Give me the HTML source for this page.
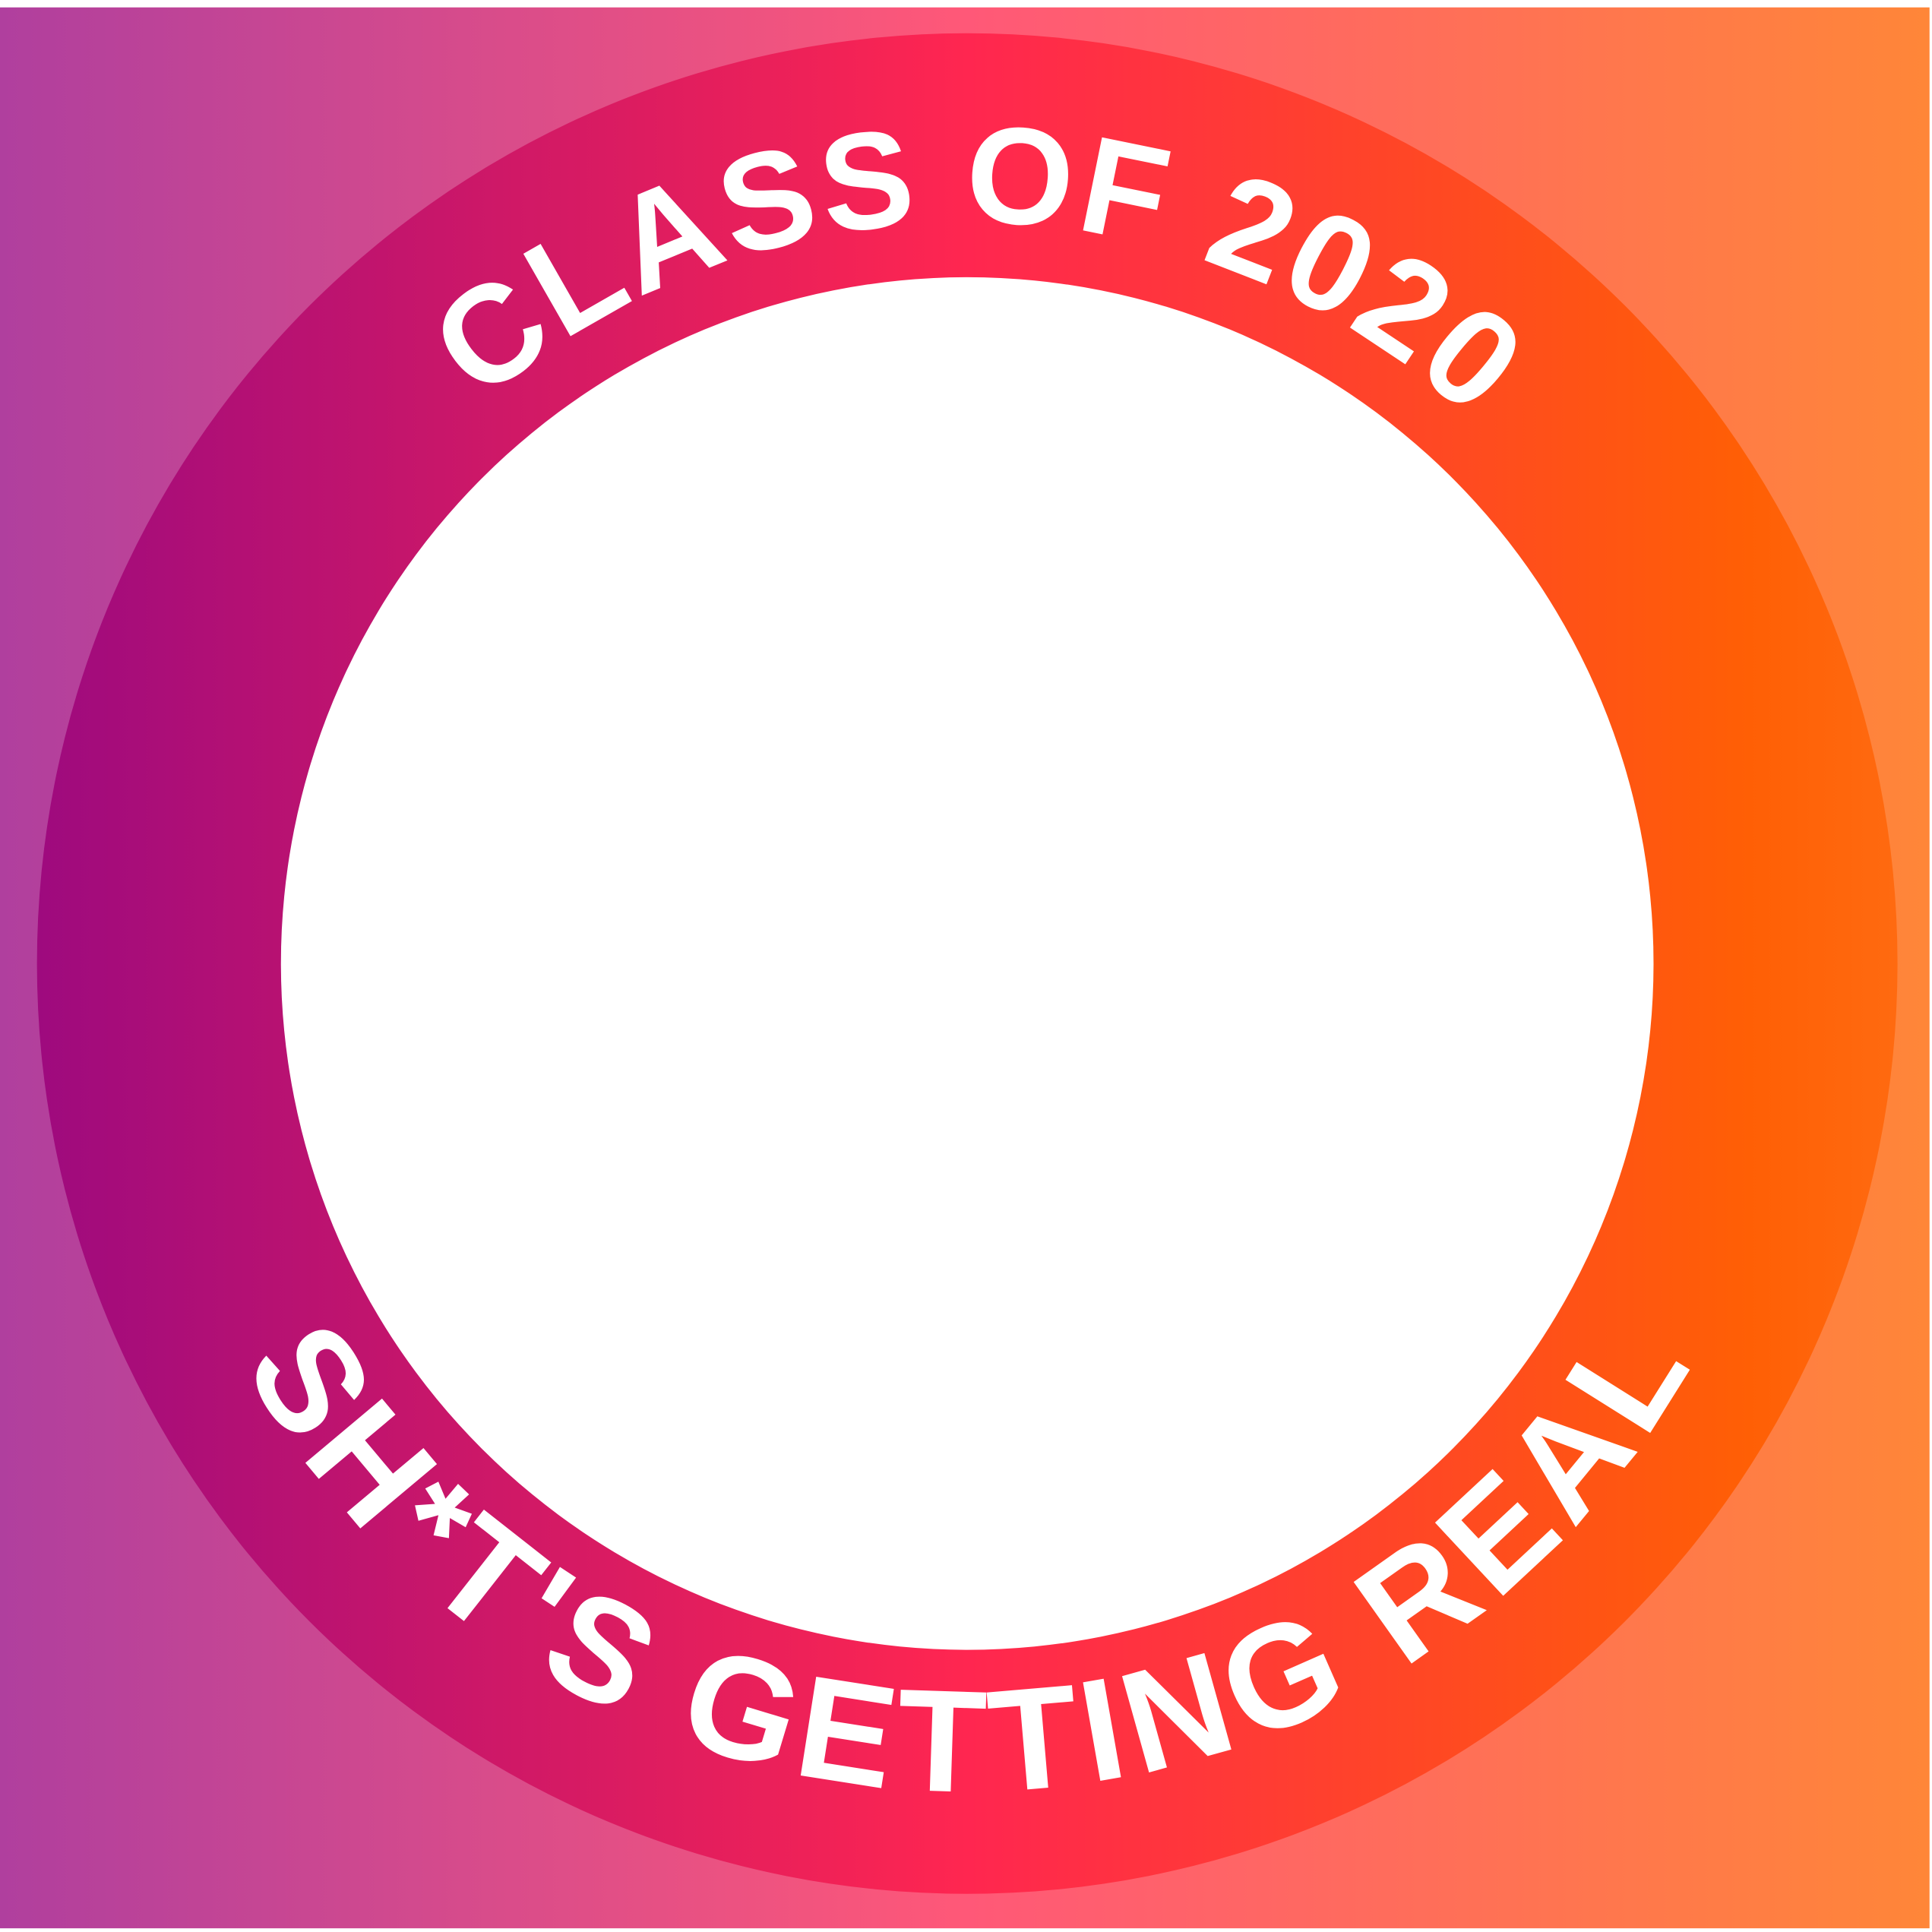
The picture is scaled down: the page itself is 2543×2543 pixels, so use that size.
<!DOCTYPE html>
<html><head><meta charset="utf-8"><style>
html,body{margin:0;padding:0;background:#fff;}
svg{display:block;}
text{font-family:"Liberation Sans",sans-serif;font-weight:bold;fill:#fff;}
</style></head><body>
<svg width="2543" height="2543" viewBox="0 0 1568 1568" xmlns="http://www.w3.org/2000/svg">
<defs>
<linearGradient id="bg" x1="0" y1="0" x2="1" y2="0">
<stop offset="0" stop-color="#b03f9e"/>
<stop offset="0.5" stop-color="#ff5878"/>
<stop offset="1" stop-color="#ff8638"/>
</linearGradient>
<linearGradient id="ring" x1="30" y1="0" x2="1540" y2="0" gradientUnits="userSpaceOnUse">
<stop offset="0" stop-color="#9e0a7e"/>
<stop offset="0.5" stop-color="#ff2650"/>
<stop offset="0.92" stop-color="#ff5f05"/>
<stop offset="1" stop-color="#ff6a10"/>
</linearGradient>
<path id="top" d="M 183 782 A 602 602 0 0 1 1387 782"/>
<path id="bot" d="M 113 782 A 672 672 0 0 0 1457 782"/>
</defs>
<rect x="0" y="6" width="1566" height="1559" fill="url(#bg)"/>
<circle cx="785" cy="782" r="755" fill="url(#ring)"/>
<circle cx="785" cy="782" r="557" fill="#fff"/>
<text font-size="112"><textPath href="#top" startOffset="50.5%" text-anchor="middle" textLength="880" lengthAdjust="spacing">CLASS OF 2020</textPath></text>
<text font-size="118"><textPath href="#bot" startOffset="50%" text-anchor="middle" textLength="1430" lengthAdjust="spacing">SH*T'S GETTING REAL</textPath></text>
</svg>
</body></html>
